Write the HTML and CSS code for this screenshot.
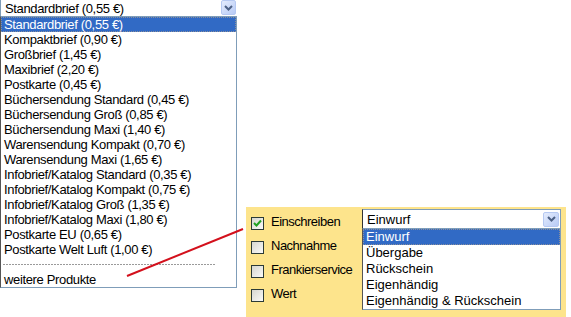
FILE: index.html
```html
<!DOCTYPE html>
<html lang="de">
<head>
  <meta charset="UTF-8">
  <title>Versandart</title>
  <link rel="stylesheet" href="styles.css">
</head>
<body>

<div class="page">
  <div class="picker">
    <div class="select-box">
      <span>Standardbrief (0,55 €)</span>
      <span class="arrow"><svg width="9" height="6" viewBox="0 0 9 6"><path d="M1 1 L4.5 4.5 L8 1" fill="none" stroke="#4d6185" stroke-width="2"/></svg></span>
    </div>
    <div class="list">
      <div class="item selected">Standardbrief (0,55 €)</div>
      <div class="item">Kompaktbrief (0,90 €)</div>
      <div class="item">Großbrief (1,45 €)</div>
      <div class="item">Maxibrief (2,20 €)</div>
      <div class="item">Postkarte (0,45 €)</div>
      <div class="item">Büchersendung Standard (0,45 €)</div>
      <div class="item">Büchersendung Groß (0,85 €)</div>
      <div class="item">Büchersendung Maxi (1,40 €)</div>
      <div class="item">Warensendung Kompakt (0,70 €)</div>
      <div class="item">Warensendung Maxi (1,65 €)</div>
      <div class="item">Infobrief/Katalog Standard (0,35 €)</div>
      <div class="item">Infobrief/Katalog Kompakt (0,75 €)</div>
      <div class="item">Infobrief/Katalog Groß (1,35 €)</div>
      <div class="item">Infobrief/Katalog Maxi (1,80 €)</div>
      <div class="item">Postkarte EU (0,65 €)</div>
      <div class="item">Postkarte Welt Luft (1,00 €)</div>
      <div class="separator"><div class="dashes"></div></div>
      <div class="item">weitere Produkte</div>
    </div>
  </div>

  <div class="panel">
    <div class="options">
      <div class="option"><span class="check checked"><svg width="9" height="8" viewBox="0 0 9 8"><path d="M1 4 L3.5 6.5 L8 1.5" fill="none" stroke="#21a121" stroke-width="2"/></svg></span><span class="label">Einschreiben</span></div>
      <div class="option"><span class="check"></span><span class="label">Nachnahme</span></div>
      <div class="option"><span class="check"></span><span class="label">Frankierservice</span></div>
      <div class="option"><span class="check"></span><span class="label">Wert</span></div>
    </div>
    <div class="picker small">
      <div class="select-box">
        <span>Einwurf</span>
        <span class="arrow"><svg width="9" height="6" viewBox="0 0 9 6"><path d="M1 1 L4.5 4.5 L8 1" fill="none" stroke="#4d6185" stroke-width="2"/></svg></span>
      </div>
      <div class="list">
        <div class="item selected">Einwurf</div>
        <div class="item">Übergabe</div>
        <div class="item">Rückschein</div>
        <div class="item">Eigenhändig</div>
        <div class="item">Eigenhändig &amp; Rückschein</div>
      </div>
    </div>
  </div>
</div>

<svg class="pointer" width="571" height="317"><line x1="127" y1="276" x2="243" y2="229" stroke="#d3101c" stroke-width="2"/></svg>

</body>
</html>
```

FILE: styles.css
```css
html, body {
  margin: 0;
  padding: 0;
  overflow: hidden;
  background: #fff;
}
body {
  width: 571px;
  height: 317px;
  position: relative;
  font-family: 'Liberation Sans', Arial, sans-serif;
  color: #000;
}

.page {
  display: flex;
  align-items: flex-start;
}

.picker {
  width: 237px;
  font-size: 13px;
  letter-spacing: -0.35px;
}
.select-box {
  height: 16px;
  display: flex;
  align-items: center;
  justify-content: space-between;
  padding-left: 4px;
  border-left: 1px solid #7f9db9;
  box-sizing: border-box;
}
.arrow {
  width: 15px;
  height: 15px;
  margin-right: 1px;
  margin-top: -1px;
  box-sizing: border-box;
  border: 1px solid #b6c9f2;
  border-radius: 2px;
  background: linear-gradient(135deg, #e4ecfd, #b8cbf6);
  display: flex;
  align-items: center;
  justify-content: center;
}

.list {
  border: 1px solid #7f9db9;
  border-left-color: #555;
  background: #fff;
}
.item {
  height: 15px;
  line-height: 15px;
  padding-left: 3px;
  white-space: nowrap;
}
.item.selected {
  background: #316ac5;
  color: #fff;
  outline: 1px dotted #8a8f9c;
  outline-offset: -1px;
}
.separator {
  height: 15px;
  display: flex;
  align-items: center;
  padding-left: 2px;
}
.dashes {
  width: 212px;
  height: 1px;
  background: repeating-linear-gradient(90deg, #9a9a9a 0 2px, transparent 2px 3px);
}

.panel {
  margin-left: 9px;
  margin-top: 207px;
  width: 320px;
  height: 110px;
  background: #fde48c;
  display: flex;
  align-items: flex-start;
}
.options {
  width: 111px;
  padding-left: 5px;
  padding-top: 4px;
  font-size: 13px;
  letter-spacing: -0.5px;
}
.option {
  height: 24px;
  display: flex;
  align-items: center;
  gap: 7px;
}
.label {
  margin-top: -3px;
}
.check {
  width: 13px;
  height: 13px;
  box-sizing: border-box;
  border: 1px solid #2b3a36;
  background: linear-gradient(135deg, #d6d6cf, #fafaf8);
  display: flex;
  align-items: center;
  justify-content: center;
}

.picker.small {
  width: 199px;
  margin-top: 2px;
  letter-spacing: 0;
}
.picker.small .select-box {
  height: 20px;
  border: 1px solid #7f9db9;
  border-left-color: #333;
  background: #fff;
}
.picker.small .arrow {
  width: 16px;
  height: 15px;
  margin-top: 0;
}
.picker.small .list {
  border-top: none;
  height: 80px;
  overflow: hidden;
}
.picker.small .item {
  height: 16px;
  line-height: 16px;
}

.pointer {
  position: absolute;
  top: 0;
  left: 0;
}
```
